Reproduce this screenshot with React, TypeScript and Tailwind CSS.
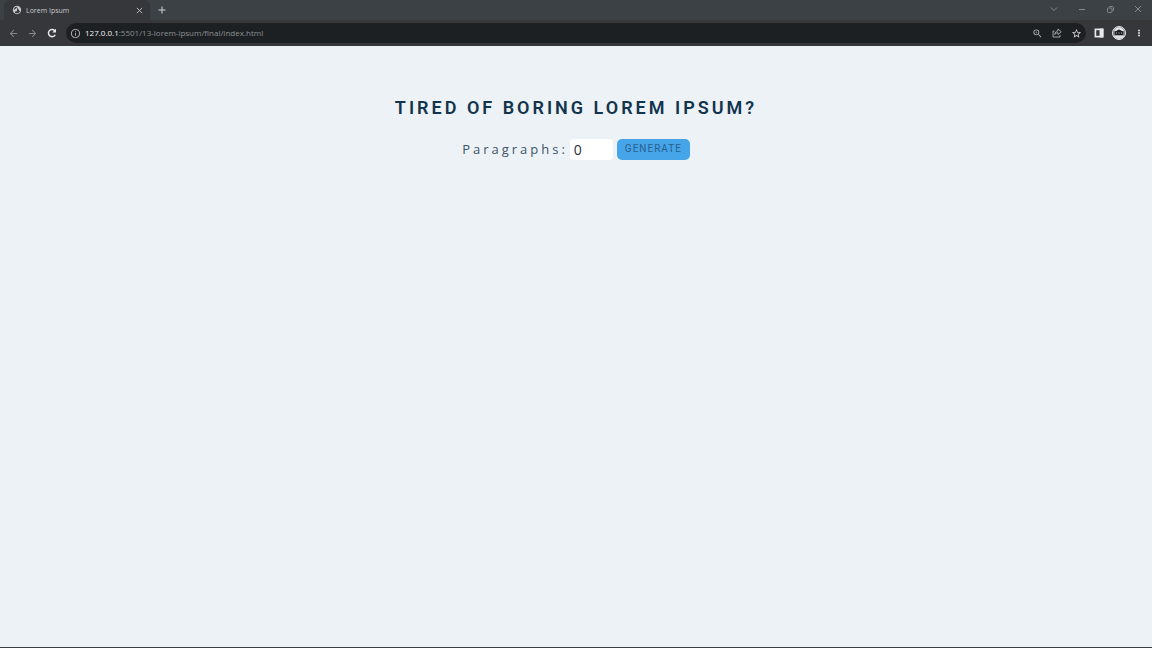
import { useState } from "react";
import type { ReactNode } from "react";
import {
  MdArrowBack,
  MdArrowForward,
  MdAdd,
  MdInfoOutline,
  MdPublic,
  MdStarBorder,
  MdZoomIn,
} from "react-icons/md";

function IconButton({ label, className = "", children }: { label: string; className?: string; children: ReactNode }) {
  return (
    <button type="button" aria-label={label} className={`flex shrink-0 items-center justify-center ${className}`}>
      {children}
    </button>
  );
}

function CrossIcon({ className }: { className: string }) {
  return (
    <svg viewBox="0 0 8 8" className={className} stroke="currentColor">
      <path d="M1 1l6 6M7 1L1 7" />
    </svg>
  );
}

function ReloadIcon() {
  return (
    <svg viewBox="0 0 24 24" className="size-3" fill="none" stroke="currentColor" strokeWidth="3">
      <path d="M18.500 15.500A7.200 7.200 0 1 1 17 6.800L19 9" />
      <path d="M20 3.500V11h-7.500z" fill="currentColor" stroke="none" />
    </svg>
  );
}

function ShareIcon() {
  return (
    <svg viewBox="0 0 20 20" className="size-[10px]" fill="none" stroke="currentColor" strokeWidth="1.8">
      <path d="M5 6H2v12h14v-4" />
      <path d="M12 2l6.500 5.500L12 13v-3.500c-3 0-5 1-6.500 3.500C6 8.500 8.500 6 12 5.500z" strokeLinejoin="round" />
    </svg>
  );
}

function SidePanelIcon() {
  return (
    <svg viewBox="0 0 18 18" className="size-[10px]">
      <rect x="2.500" y="2.500" width="13" height="13" fill="none" stroke="currentColor" strokeWidth="3" />
      <rect x="10" y="1" width="7" height="16" fill="currentColor" />
    </svg>
  );
}

function RestoreIcon() {
  return (
    <svg viewBox="0 0 14 14" className="size-[7px]" fill="none" stroke="currentColor" strokeWidth="2">
      <rect x="1" y="4" width="9" height="9" rx="2" />
      <path d="M4 2.500C4 1.500 5 1 6 1h4c2 0 3 1 3 3v4c0 1-.5 2-1.500 2" />
    </svg>
  );
}

function Avatar() {
  return (
    <svg viewBox="0 0 28 28" className="size-[14px]">
      <circle cx="14" cy="14" r="13" fill="#74787b" stroke="#e6e8e9" strokeWidth="2" />
      <path d="M4 10C6 0 22 0 24 10z" fill="#e3e4e5" />
      <path d="M6 11l4-2 4-2 4 2 4 2v7H6z" fill="#1b1e21" />
      <path d="M8 14h2m3 0h2m3 0h2" stroke="#c9cccd" strokeWidth="2" />
      <path d="M3 19h22c-3 9-19 9-22 0z" fill="#dddfe0" />
    </svg>
  );
}

function MenuIcon() {
  return (
    <svg viewBox="0 0 12 12" className="size-3" fill="currentColor">
      <rect x="5" y="2" width="2" height="2" />
      <rect x="5" y="5" width="2" height="2" />
      <rect x="5" y="8" width="2" height="2" />
    </svg>
  );
}

function TabStrip() {
  return (
    <div className="flex h-5 items-stretch justify-between bg-[#3c4145]">
      <div className="flex items-stretch pl-1">
        <div className="flex w-[146px] items-center rounded-t-md bg-[#35373b] pr-[7px] pl-2 text-[#c7c9cb]">
          <MdPublic className="size-[10px] rotate-90" />
          <span className="ml-1 flex-1 font-['Open_Sans',sans-serif] text-[7px] leading-none">Lorem Ipsum</span>
          <IconButton label="Close tab">
            <CrossIcon className="size-[7px]" />
          </IconButton>
        </div>
        <IconButton label="New tab" className="ml-1.5 text-[#d1d4d6]">
          <MdAdd className="size-3" />
        </IconButton>
      </div>
      <div className="flex items-center gap-5 pr-2.5 pb-0.5 text-[#85898c]">
        <IconButton label="Search tabs" className="w-2">
          <svg viewBox="0 0 16 16" className="size-2" fill="none" stroke="currentColor" strokeWidth="2">
            <path d="M2 5l6 6 6-6" />
          </svg>
        </IconButton>
        <IconButton label="Minimize" className="w-2">
          <svg viewBox="0 0 8 8" className="size-2" stroke="currentColor">
            <path d="M1 4.500h6" />
          </svg>
        </IconButton>
        <IconButton label="Restore" className="w-2">
          <RestoreIcon />
        </IconButton>
        <IconButton label="Close window" className="w-2">
          <CrossIcon className="size-2" />
        </IconButton>
      </div>
    </div>
  );
}

function Toolbar() {
  return (
    <div className="flex h-[26px] items-center bg-[#35373b] px-2">
      <div className="flex items-center gap-2">
        <IconButton label="Back" className="text-[#85888a]">
          <MdArrowBack className="size-[11px]" />
        </IconButton>
        <IconButton label="Forward" className="text-[#85888a]">
          <MdArrowForward className="size-[11px]" />
        </IconButton>
        <IconButton label="Reload" className="text-[#e5e7e8]">
          <ReloadIcon />
        </IconButton>
      </div>
      <div className="ml-2 flex h-5 flex-1 items-center rounded-full bg-[#1d2023] px-1 text-[#aeb1b3]">
        <MdInfoOutline className="size-[11px] shrink-0" />
        <a
          href="http://127.0.0.1:5501/13-lorem-ipsum/final/index.html"
          className="ml-1 flex-1 font-['Open_Sans',sans-serif] text-[8px] leading-none text-[#8c9092]"
        >
          <span className="text-[#f0f2f3]">127.0.0.1</span>:5501/13-lorem-ipsum/final/index.html
        </a>
        <div className="flex items-center gap-[9px]">
          <IconButton label="Zoom">
            <MdZoomIn className="size-[11px]" />
          </IconButton>
          <IconButton label="Share this page">
            <ShareIcon />
          </IconButton>
          <IconButton label="Bookmark this tab" className="text-[#d5d8da]">
            <MdStarBorder className="size-[11px]" />
          </IconButton>
        </div>
      </div>
      <div className="ml-2 flex items-center gap-2 text-[#e8e9ea]">
        <IconButton label="Side panel">
          <SidePanelIcon />
        </IconButton>
        <IconButton label="Profile">
          <Avatar />
        </IconButton>
        <IconButton label="Browser menu" className="w-2.5">
          <MenuIcon />
        </IconButton>
      </div>
    </div>
  );
}

export default function App() {
  const [count, setCount] = useState("0");

  return (
    <div className="flex min-h-screen flex-col border-b border-[#3a3f43] bg-[#ecf2f6]">
      <header>
        <TabStrip />
        <Toolbar />
      </header>
      <main className="flex flex-col items-center px-4 pt-12">
        <h1 className="text-center font-['Roboto',sans-serif] text-[18px] leading-7 font-semibold tracking-[3px] text-[#12344d] uppercase">
          Tired of boring lorem ipsum?
        </h1>
        <form className="mt-4 flex items-center" onSubmit={(event) => event.preventDefault()}>
          <label
            htmlFor="amount"
            className="font-['Open_Sans',sans-serif] text-[13px] leading-[22px] tracking-[3px] text-[#3e5467]"
          >
            Paragraphs:
          </label>
          <input
            id="amount"
            type="number"
            min="0"
            value={count}
            onChange={(event) => setCount(event.target.value)}
            className="ml-0.5 h-[21px] w-[43px] rounded bg-white px-1 font-['Open_Sans',sans-serif] text-[14px] leading-5 text-[#26323c]"
          />
          <button
            type="submit"
            className="ml-1 h-[21px] rounded-[5px] bg-[#46a4e9] px-2 font-['Roboto',sans-serif] text-[10px] leading-none tracking-[1px] text-[#28618e] uppercase"
          >
            Generate
          </button>
        </form>
      </main>
    </div>
  );
}
